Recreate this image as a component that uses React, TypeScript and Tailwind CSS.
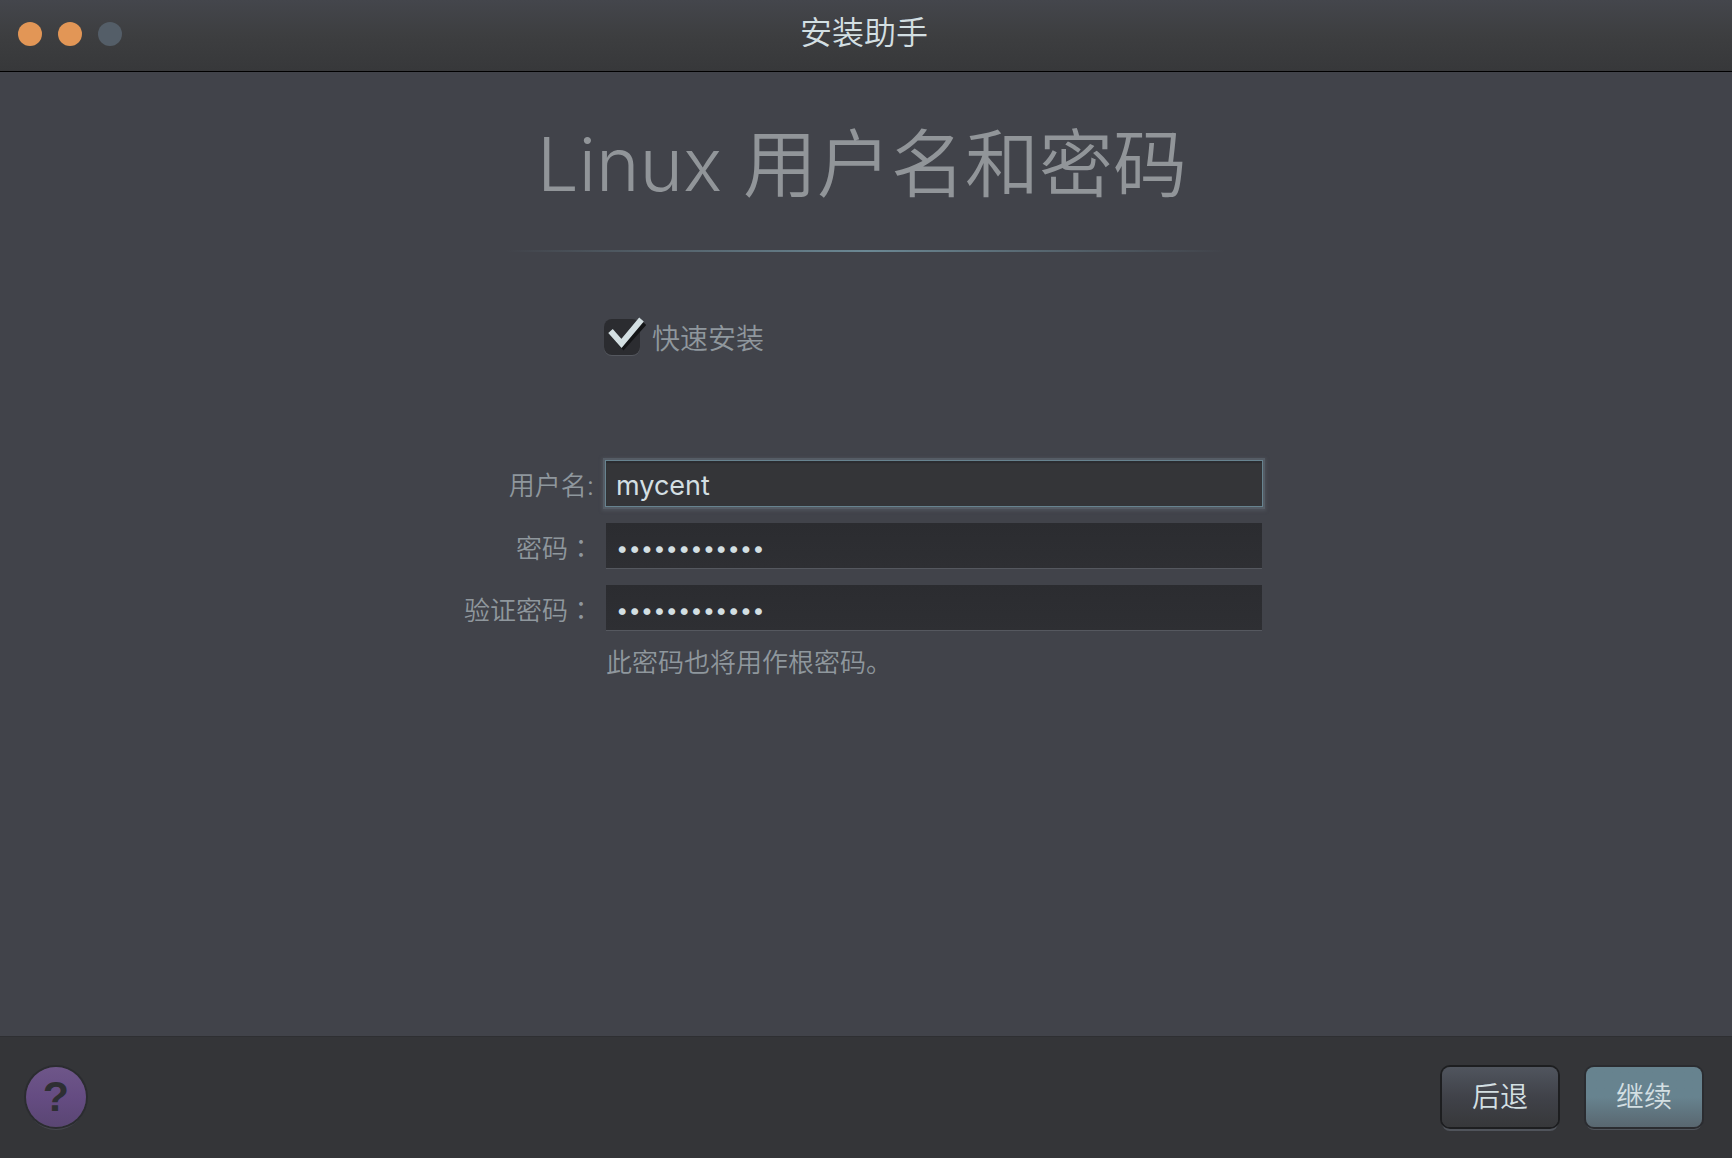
import { useState } from "react";

const sans = "font-['Inter','Noto_Sans_CJK_SC',sans-serif]";

const fieldClass =
  "block h-[45px] w-full bg-linear-to-b from-[#2b2c30] to-[#2e2f33] px-2.5 pt-1 text-[22px] leading-8 text-[#d3dfe2] outline-none shadow-[0_1px_0_#55585f]";

const focusedFieldClass =
  "block h-[45px] w-full bg-[#343538] px-2.5 pt-1 text-[27px] leading-8 text-[#d3dfe2] outline-none shadow-[0_0_0_1px_#67838f,0_0_0_3px_#555c65,0_1px_3px_4px_#4d5159,inset_0_2px_1px_#2b2c30]";

const labelClass = "pt-1 text-right font-[350]";

function Colon() {
  return (
    <span lang="zh-TW" className="font-['Noto_Sans_CJK_TC',sans-serif]">
      ：
    </span>
  );
}

function WindowControls() {
  return (
    <div className="flex flex-1 gap-4">
      <button aria-label="关闭" className="size-6 rounded-full bg-[#e29656]" />
      <button aria-label="最小化" className="size-6 rounded-full bg-[#e29656]" />
      <button aria-label="缩放" disabled className="size-6 rounded-full bg-[#545e68]" />
    </div>
  );
}

export default function App() {
  const [quick, setQuick] = useState(true);
  const [user, setUser] = useState("mycent");
  const [password, setPassword] = useState("centos123456");
  const [confirm, setConfirm] = useState("centos123456");

  return (
    <div lang="zh-CN" className={`flex min-h-screen flex-col bg-[#41434a] ${sans}`}>
      <header className="flex h-[72px] items-center border-b border-black bg-linear-to-b from-[#44464c] via-[#3d3e40] to-[#37383a] pr-[22px] pb-1 pl-[18px]">
        <WindowControls />
        <h2 className="pb-0.5 text-[32px] leading-10 font-[350] text-[#d3dfe2]">安装助手</h2>
        <div className="flex-1" />
      </header>

      <main className="flex-1 pt-12">
        <h1 className="pr-2 text-center text-[74px] leading-[88px] font-[350] text-[#919599]">
          Linux 用户名和密码
        </h1>
        <div className="mx-auto mt-[42px] h-0.5 max-w-[720px] bg-linear-to-r from-transparent via-[#6b8894] to-transparent" />

        <form className="mx-auto max-w-[864px] pt-[65px] pr-9" onSubmit={(e) => e.preventDefault()}>
          <label className="ml-[170px] flex w-fit items-center gap-3 text-[28px] leading-9 font-[350] text-[#8f979d]">
            <span className="relative block size-9">
              <input
                type="checkbox"
                checked={quick}
                onChange={(e) => setQuick(e.target.checked)}
                className="block size-9 appearance-none rounded-lg bg-[#2b2c30] shadow-[0_1px_0_#55585f]"
              />
              {quick && (
                <svg
                  viewBox="0 0 42 38"
                  className="pointer-events-none absolute -top-0.5 left-0 h-[38px] w-[42px]"
                  fill="none"
                  strokeWidth="6"
                >
                  <path d="M9 17 L19.500 29 L40 6" stroke="#141517" />
                  <path d="M6.500 14 L17.500 26.500 L37.500 2.500" stroke="#d3dfe2" />
                </svg>
              )}
            </span>
            <span className="pt-1">快速安装</span>
          </label>

          <div className="mt-[104px] grid grid-cols-[160px_1fr] items-center gap-x-3 gap-y-[17px] text-[26px] leading-8 text-[#8f979d]">
            <label htmlFor="user" className={labelClass}>
              用户名:
            </label>
            <input
              id="user"
              type="text"
              value={user}
              onChange={(e) => setUser(e.target.value)}
              className={focusedFieldClass}
            />
            <label htmlFor="password" className={labelClass}>
              密码
              <Colon />
            </label>
            <input
              id="password"
              type="password"
              value={password}
              onChange={(e) => setPassword(e.target.value)}
              className={fieldClass}
            />
            <label htmlFor="confirm" className={labelClass}>
              验证密码
              <Colon />
            </label>
            <input
              id="confirm"
              type="password"
              value={confirm}
              onChange={(e) => setConfirm(e.target.value)}
              className={fieldClass}
            />
            <p className="col-start-2 font-[350]">此密码也将用作根密码。</p>
          </div>
        </form>
      </main>

      <footer className="flex h-[122px] items-center gap-7 border-t border-[#2e2f32] bg-[#343538] pr-[30px] pb-0.5 pl-[26px]">
        <button
          aria-label="帮助"
          className="mr-auto flex size-[60px] items-center justify-center rounded-full bg-linear-to-b from-[#6e5689] via-[#654c82] to-[#5a4673] font-['Liberation_Sans',sans-serif] text-[43px] leading-none font-bold text-[#2e2f33] shadow-[0_0_0_2px_#2b2c30,0_3px_0_#45474d]"
        >
          ?
        </button>
        <button className="h-[60px] w-[116px] rounded-lg bg-linear-to-b from-[#50555e] via-[#404249] to-[#37383a] text-[28px] leading-8 font-[350] text-[#d3dfe2] shadow-[0_0_0_2px_#1d1e20,0_4px_0_#50545b]">
          后退
        </button>
        <button className="h-[60px] w-[116px] rounded-lg bg-linear-to-b from-[#67838f] via-[#67838f] to-[#596770] text-[28px] leading-8 font-[350] text-[#d3dfe2] shadow-[0_0_0_2px_#2b2c30,0_3px_0_#50545b]">
          继续
        </button>
      </footer>
    </div>
  );
}
